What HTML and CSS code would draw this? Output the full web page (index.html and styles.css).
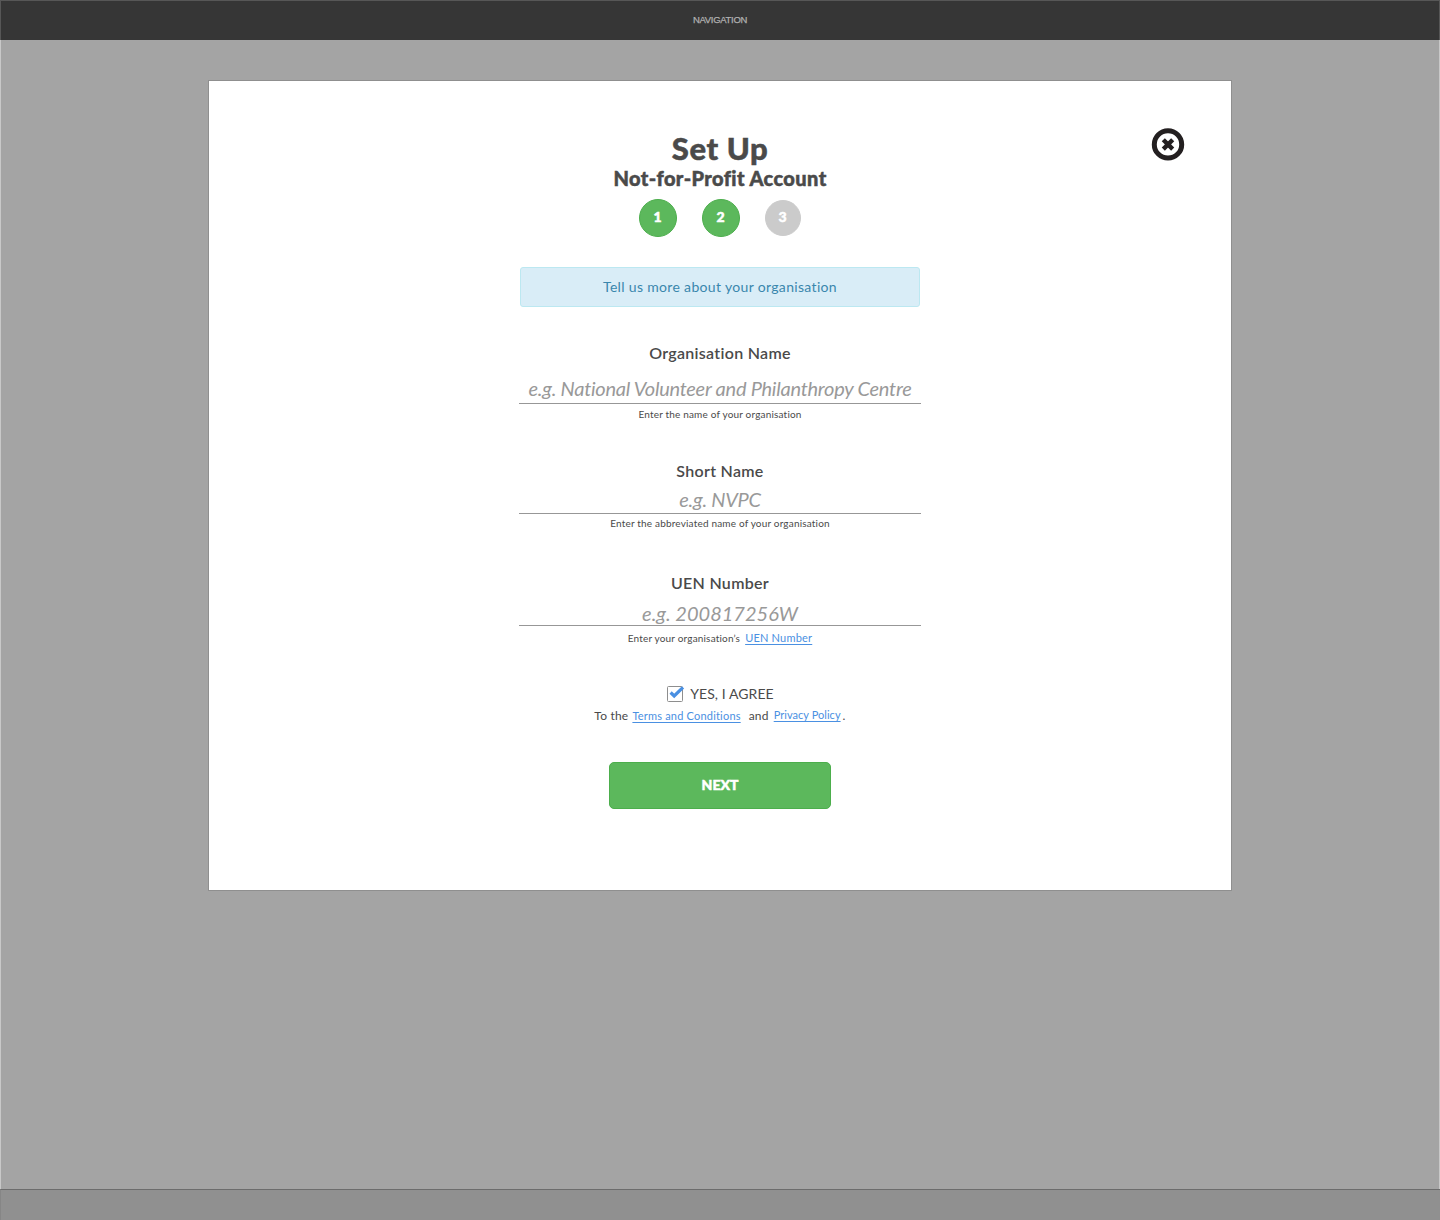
FILE: index.html
```html
<!DOCTYPE html>
<html lang="en">
<head>
<meta charset="utf-8">
<title>Set Up Not-for-Profit Account</title>
<link rel="stylesheet" href="styles.css">
</head>
<body>
<div class="page">
  <nav class="nav"><span class="nav-text">NAVIGATION</span></nav>
  <div class="backdrop">
    <main class="modal">
      <button class="close" aria-label="Close">
        <svg width="34" height="34" viewBox="0 0 34 34">
          <circle cx="17" cy="17.4" r="13.7" fill="none" stroke="#231f20" stroke-width="5"/>
          <path d="M12.3 12.7 L21.7 22.1 M21.7 12.7 L12.3 22.1" fill="none" stroke="#231f20" stroke-width="4.4"/>
        </svg>
      </button>
      <h1 class="title">Set Up</h1>
      <h2 class="subtitle">Not-for-Profit Account</h2>
      <div class="steps">
        <span class="step">1</span>
        <span class="step">2</span>
        <span class="step step-off">3</span>
      </div>
      <div class="alert">Tell us more about your organisation</div>
      <form class="form">
        <div class="field field-org">
          <div class="label">Organisation Name</div>
          <div class="entry">e.g. National Volunteer and Philanthropy Centre</div>
          <div class="help">Enter the name of your organisation</div>
        </div>
        <div class="field field-short">
          <div class="label">Short Name</div>
          <div class="entry">e.g. NVPC</div>
          <div class="help">Enter the abbreviated name of your organisation</div>
        </div>
        <div class="field field-uen">
          <div class="label">UEN Number</div>
          <div class="entry">e.g. 200817256W</div>
          <div class="help help-link"><span>Enter your organisation’s</span><a class="link">UEN Number</a></div>
        </div>
        <div class="agree">
          <svg class="check" width="20" height="18" viewBox="0 0 20 18">
            <rect x="1.5" y="1.5" width="15" height="15" rx="1" fill="#fff" stroke="#8e8e8e"/>
            <path d="M4.6 7.5 L8.2 11 L17 2.4" fill="none" stroke="#4a90e2" stroke-width="3.2"/>
          </svg>
          <span class="agree-text">YES, I AGREE</span>
        </div>
        <div class="terms">
          <span>To the</span><a class="link link-terms">Terms and Conditions</a><span>and</span><a class="link link-privacy">Privacy Policy</a><span class="terms-dot">.</span>
        </div>
        <button class="next" type="button">NEXT</button>
      </form>
    </main>
  </div>
  <footer class="footer"></footer>
</div>
</body>
</html>
```
FILE: styles.css
```css
* { box-sizing: border-box; }
body { margin: 0; font-family: Lato, sans-serif; font-variant-ligatures: none; color: #4a4a4a; }
.page { width: 1440px; height: 1220px; display: flex; flex-direction: column; }
.nav { height: 40px; background: #363636; border: 1px solid #575757; border-bottom: 0; display: flex; justify-content: center; padding-top: 12px; }
.nav-text { font: 9.5px/14px "Liberation Sans", sans-serif; letter-spacing: -0.3px; color: #b0b0b0; -webkit-text-stroke: 0.25px #b0b0b0; }
.backdrop { flex: 1; background: #a4a4a4; border: solid #c8c8c8; border-width: 0 1px; padding-top: 40px; display: flex; justify-content: center; align-items: flex-start; }
.footer { height: 31px; background: #909090; border-top: 1px solid #6c6c6c; border-left: 1px solid #868686; }
.modal { position: relative; width: 1024px; height: 811px; background: #fff; border: 1px solid #8f8f8f; padding-top: 49px; display: flex; flex-direction: column; align-items: center; }
.close { position: absolute; top: 46px; right: 46px; width: 34px; height: 34px; padding: 0; border: 0; background: none; }
.close svg { display: block; }
.title, .subtitle { margin: 0; font-weight: 900; white-space: nowrap; -webkit-text-stroke: 0.5px #4a4a4a; }
.title { font-size: 31px; line-height: 37px; letter-spacing: 0.6px; }
.subtitle { font-size: 20px; line-height: 24px; margin-top: -1px; letter-spacing: 0.4px; }
.steps { display: flex; align-items: center; gap: 25px; height: 38px; margin: 9px 1px 0 0; }
.step { width: 38px; height: 38px; border-radius: 50%; background: #5cb85c; border: 1px solid #4cae4c; color: #fff; font-size: 14px; font-weight: 900; line-height: 34px; text-align: center; -webkit-text-stroke: 0.5px #fff; }
.step-off { width: 36px; height: 36px; background: #cbcbcb; border-color: #cbcbcb; line-height: 32px; }
.alert { width: 400px; height: 40px; margin-top: 30px; background: #d9edf7; border: 1px solid #bce8f1; border-radius: 3px; color: #3a87ad; font-size: 14px; line-height: 37px; text-align: center; letter-spacing: 0.33px; }
.form { display: flex; flex-direction: column; align-items: center; width: 402px; white-space: nowrap; }
.field { width: 402px; text-align: center; }
.label { font-size: 16px; line-height: 20px; font-weight: 600; letter-spacing: 0.3px; }
.entry { display: flex; justify-content: center; border-bottom: 1px solid #979797; color: #999; font-size: 20px; font-style: italic; line-height: 26px; letter-spacing: -0.25px; }
.help { font-size: 10px; line-height: 14px; letter-spacing: 0.18px; }
.field-org { margin-top: 36px; height: 118px; }
.field-org .entry { height: 41px; padding-top: 12px; }
.field-org .help { margin-top: 3px; }
.field-short .help { margin-top: 2px; }
.field-short { height: 112px; }
.field-short .entry { height: 33px; padding-top: 5px; }
.field-uen { height: 112px; }
.field-uen .entry { height: 33px; padding-top: 7px; letter-spacing: 0; }
.help-link { display: flex; justify-content: center; align-items: center; margin-top: 5px; gap: 5px; }
.link { color: #4a90e2; font-size: 11px; letter-spacing: 0.2px; text-decoration: underline; text-underline-offset: 1.5px; }
.agree { display: flex; align-items: center; gap: 4px; height: 18px; }
.agree-text { font-size: 14px; line-height: 18px; letter-spacing: 0.08px; }
.terms { display: flex; align-items: center; height: 20px; margin-top: 3px; line-height: 16px; font-size: 12px; letter-spacing: 0.2px; }
.link-terms { margin: 0 8px 0 4px; }
.link-privacy { margin-left: 5px; letter-spacing: 0.04px; position: relative; top: -1px; }
.terms-dot { margin-left: 2px; }
.next { width: 222px; height: 47px; margin-top: 36px; padding: 0 0 2px; border: 1px solid #4cae4c; border-radius: 5px; background: #5cb85c; color: #fff; font: 900 14px Lato, sans-serif; -webkit-text-stroke: 0.5px #fff; }
```
